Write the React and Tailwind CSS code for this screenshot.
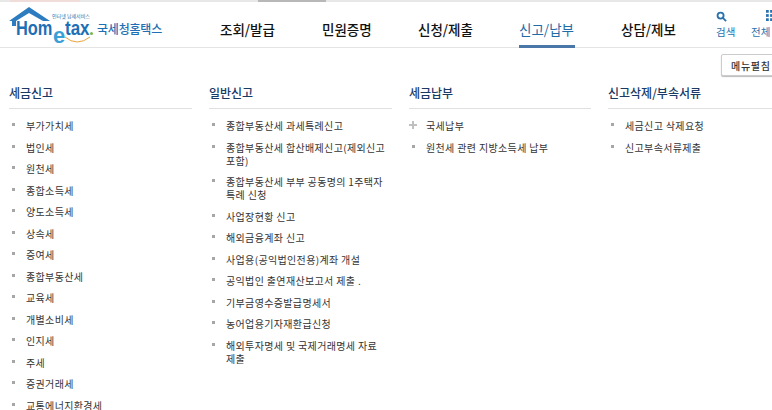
const FONT = "font-['Noto_Sans_CJK_KR','Liberation_Sans',sans-serif]";

const cols = [
  {
    title: "세금신고",
    w: "w-[183px]",
    items: ["부가가치세", "법인세", "원천세", "종합소득세", "양도소득세", "상속세", "증여세", "종합부동산세", "교육세", "개별소비세", "인지세", "주세", "증권거래세", "교통에너지환경세"],
  },
  {
    title: "일반신고",
    w: "w-[183px]",
    items: [
      "종합부동산세 과세특례신고",
      "종합부동산세 합산배제신고(제외신고 포함)",
      "종합부동산세 부부 공동명의 1주택자 특례 신청",
      "사업장현황 신고",
      "해외금융계좌 신고",
      "사업용(공익법인전용)계좌 개설",
      "공익법인 출연재산보고서 제출 .",
      "기부금영수증발급명세서",
      "농어업용기자재환급신청",
      "해외투자명세 및 국제거래명세 자료 제출",
    ],
  },
  {
    title: "세금납부",
    w: "w-[182px]",
    items: ["국세납부", "원천세 관련 지방소득세 납부"],
    plusFirst: true,
  },
  {
    title: "신고삭제/부속서류",
    w: "w-[170px]",
    items: ["세금신고 삭제요청", "신고부속서류제출"],
  },
];

const nav = [
  { label: "조회/발급", w: "w-[102px]" },
  { label: "민원증명", w: "w-[96px]" },
  { label: "신청/제출", w: "w-[101px]" },
  { label: "신고/납부", w: "w-[102px]", active: true },
  { label: "상담/제보", w: "w-[95px]" },
];

function Logo() {
  return (
    <div className="relative w-[165px] h-[41px] shrink-0">
      <svg className="absolute left-0 top-0" width="50" height="24" viewBox="0 0 50 24">
        <path d="M4 15 L24 1 L45 15 L38 15 L24 7 L11 15 L11 20 L7 20 L7 15 Z" fill="#2d7cc0" />
      </svg>
      <span className="absolute left-[11px] top-[14px] origin-left scale-x-[0.82] font-['Liberation_Sans',sans-serif] font-bold text-[20px] leading-[16px] text-[#1f6fb5]">Hom</span>
      <span className="absolute left-[48px] top-[21px] font-['Liberation_Sans',sans-serif] font-bold text-[22px] leading-[18px] text-[#3aa0d8]">e</span>
      <span className="absolute left-[60px] top-[14px] origin-left scale-x-[0.85] font-['Liberation_Sans',sans-serif] font-bold text-[20px] leading-[16px] text-[#1f6fb5]">tax</span>
      <span className="absolute left-[85px] top-[26px] w-[3px] h-[3px] rounded-full bg-[#7ab648]" />
      <span className={`absolute left-[47px] top-[7px] text-[5px] leading-[6px] text-[#2d6fa8] whitespace-nowrap ${FONT}`}>인터넷 납세서비스</span>
      <span className={`absolute left-[92px] top-[15px] text-[12px] leading-[16px] font-medium text-[#1f6fb5] tracking-[-0.2px] whitespace-nowrap ${FONT}`}>국세청홈택스</span>
      <svg className="absolute left-[60px] top-[30px]" width="26" height="8" viewBox="0 0 26 8">
        <path d="M0 1 Q12 11 25 1" stroke="#e8a33c" strokeWidth="1" fill="none" />
      </svg>
    </div>
  );
}

function Header() {
  return (
    <header className="flex items-stretch h-[46px] border-b border-[#e4e4e4] pl-[5px]">
      <div className="pt-[4px] w-[215px] shrink-0"><Logo /></div>
      <nav className="flex shrink-0">
        {nav.map((n) => (
          <div key={n.label} className={`${n.w} shrink-0 relative flex pt-[18px]`}>
            <span className={`text-[13.5px] leading-[18px] whitespace-nowrap ${n.active ? "text-[#1e6ba8]" : "text-[#111111] font-medium"}`}>{n.label}</span>
            {n.active && <span className="absolute left-0 bottom-[-1px] w-[56px] h-[3px] bg-[#4a76a8]" />}
          </div>
        ))}
      </nav>
      <div className="flex shrink-0 gap-[15px] pt-[9px]">
        <div className="flex flex-col items-start w-[20px]">
          <svg width="11" height="11" viewBox="0 0 12 12" fill="none" stroke="#2a72ae" strokeWidth="2">
            <circle cx="5" cy="5" r="3.3" />
            <path d="M7.5 7.5 L11 11" />
          </svg>
          <span className="text-[10.5px] leading-[14px] mt-[3px] text-[#2a72ae] whitespace-nowrap">검색</span>
        </div>
        <div className="flex flex-col items-start w-[20px]">
          <svg className="ml-[15px] -mt-[1px]" width="11" height="11" viewBox="0 0 12 12" fill="#2a72ae">
            <rect x="0" y="0" width="3" height="3" /><rect x="4.5" y="0" width="3" height="3" /><rect x="9" y="0" width="3" height="3" />
            <rect x="0" y="4.5" width="3" height="3" /><rect x="4.5" y="4.5" width="3" height="3" /><rect x="9" y="4.5" width="3" height="3" />
            <rect x="0" y="9" width="3" height="3" /><rect x="4.5" y="9" width="3" height="3" /><rect x="9" y="9" width="3" height="3" />
          </svg>
          <span className="text-[10.5px] leading-[14px] mt-[4px] text-[#2a72ae] whitespace-nowrap">전체</span>
        </div>
      </div>
    </header>
  );
}

function Bullet({ plus }) {
  if (plus) {
    return (
      <svg className="absolute left-[0px] top-[2px]" width="8" height="8" viewBox="0 0 8 8" fill="#c0c0c0">
        <path d="M3 0h2v3h3v2H5v3H3V5H0V3h3z" />
      </svg>
    );
  }
  return <span className="absolute left-[3px] top-[4px] w-[3px] h-[3px] bg-[#a6a6a6]" />;
}

function Column({ col }) {
  return (
    <section className={`${col.w} shrink-0`}>
      <h2 className="h-[25px] border-b border-[#e0e0e0] pt-[1px] text-[12px] leading-[16px] font-medium text-[#1a3a66] whitespace-nowrap">{col.title}</h2>
      <ul className="flex flex-col gap-[8.5px] mt-[10px]">
        {col.items.map((t, i) => (
          <li key={t} className="relative pl-[17px] pr-[2px] text-[10px] leading-[13px] tracking-[0.35px] break-keep text-[#333333]">
            <Bullet plus={col.plusFirst && i === 0} />
            {t}
          </li>
        ))}
      </ul>
    </section>
  );
}

export default function App() {
  return (
    <div className={`w-[772px] h-[410px] overflow-hidden bg-white relative ${FONT}`}>
      <div className="flex h-[2px] bg-[#e8e8e8]">
        <div className="ml-[10px] w-[70px] bg-[#f0dcd8]" />
        <div className="ml-[178px] w-[68px] bg-[#b8b8b8]" />
      </div>
      <Header />
      <div className="flex justify-end pt-[6px] h-[36px]">
        <button className="w-[61px] h-[22px] shrink-0 -mr-[10px] border border-[#cccccc] rounded-[2px] shadow-[0_1px_1px_#bbbbbb] bg-white text-[10px] font-medium leading-[21px] tracking-[0.7px] text-[#333333] text-left pl-[9px] whitespace-nowrap overflow-hidden">메뉴펼침</button>
      </div>
      <main className="flex gap-[17px] pl-[9px]">
        {cols.map((c) => <Column key={c.title} col={c} />)}
      </main>
    </div>
  );
}
